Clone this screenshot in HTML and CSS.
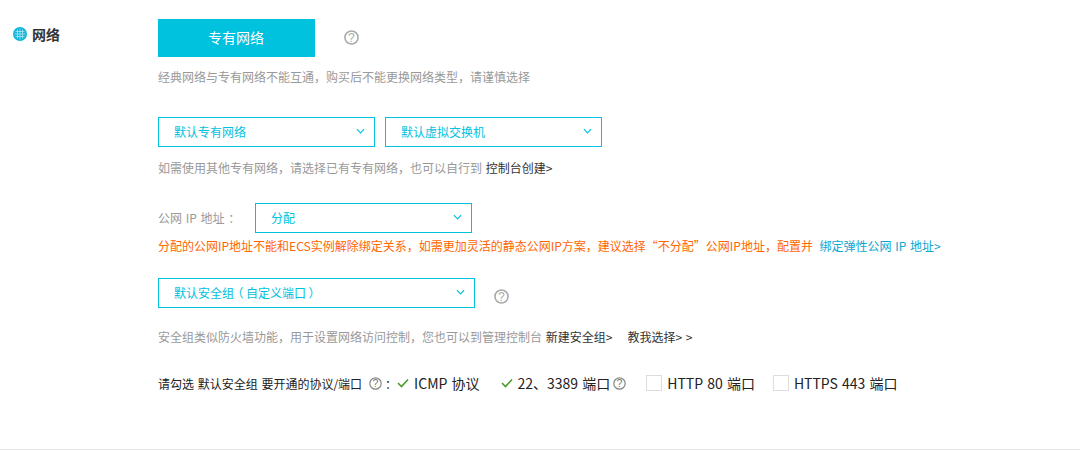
FILE: index.html
```html
<!DOCTYPE html>
<html lang="zh-CN">
<head>
<meta charset="utf-8">
<title>网络</title>
<link rel="stylesheet" href="styles.css">
</head>
<body>
<section class="section">
  <div class="label">
    <svg class="globe" viewBox="0 0 14 14" width="14" height="14">
      <circle cx="7" cy="7" r="7" fill="#12b5d8"/>
      <path d="M4.5 2.5v9M7 1.5v11M9.500 2.500v9M2.500 4.500h9M1.500 7h11M2.500 9.500h9" stroke="#a8e6f3" stroke-width=".8" fill="none"/>
    </svg>
    <span>网络</span>
  </div>
  <div class="content">
    <div class="row-network">
      <button class="primary">专有网络</button>
      <svg class="help help-lg" viewBox="0 0 16 16" width="15" height="15"><circle cx="8" cy="8" r="7" fill="none" stroke="#aaa" stroke-width="1.7"/><text x="8" y="12.7" text-anchor="middle" class="help-mark">?</text></svg>
    </div>
    <p class="hint hint-1">经典网络与专有网络不能互通，购买后不能更换网络类型，请谨慎选择</p>
    <div class="row-selects">
      <div class="select w217"><span>默认专有网络</span><svg class="chev" viewBox="0 0 10 6" width="9" height="6"><path d="M1 1l4 4 4-4" fill="none" stroke="#00c1de" stroke-width="1.3"/></svg></div>
      <div class="select w217"><span>默认虚拟交换机</span><svg class="chev" viewBox="0 0 10 6" width="9" height="6"><path d="M1 1l4 4 4-4" fill="none" stroke="#00c1de" stroke-width="1.3"/></svg></div>
    </div>
    <p class="hint hint-2">如需使用其他专有网络，请选择已有专有网络，也可以自行到 <a class="dark">控制台创建&gt;</a></p>
    <div class="row-ip">
      <span class="ip-label">公网 IP 地址 ：</span>
      <div class="select w217"><span>分配</span><svg class="chev" viewBox="0 0 10 6" width="9" height="6"><path d="M1 1l4 4 4-4" fill="none" stroke="#00c1de" stroke-width="1.3"/></svg></div>
    </div>
    <p class="warn">分配的公网IP地址不能和ECS实例解除绑定关系，如需更加灵活的静态公网IP方案，建议选择“不分配”公网IP地址，配置并 <a class="blue">绑定弹性公网 IP 地址&gt;</a></p>
    <div class="row-sg">
      <div class="select w317"><span>默认安全组<span class="paren">（</span>自定义端口<span class="paren">）</span></span><svg class="chev" viewBox="0 0 10 6" width="9" height="6"><path d="M1 1l4 4 4-4" fill="none" stroke="#00c1de" stroke-width="1.3"/></svg></div>
      <svg class="help help-sg" viewBox="0 0 16 16" width="15" height="15"><circle cx="8" cy="8" r="7" fill="none" stroke="#aaa" stroke-width="1.7"/><text x="8" y="12.7" text-anchor="middle" class="help-mark">?</text></svg>
    </div>
    <p class="hint hint-3">安全组类似防火墙功能，用于设置网络访问控制，您也可以到管理控制台 <a class="dark">新建安全组&gt;</a><a class="dark teach">教我选择&gt; &gt;</a></p>
    <div class="row-ports">
      <span class="ports-label">请勾选 默认安全组 要开通的协议/端口</span>
      <svg class="help help-sm" viewBox="0 0 16 16" width="13" height="13"><circle cx="8" cy="8" r="7" fill="none" stroke="#888" stroke-width="1.5"/><text x="8" y="12.7" text-anchor="middle" class="help-mark dark-mark">?</text></svg>
      <span class="colon">：</span>
      <span class="port port-icmp"><svg class="check" viewBox="0 0 12 10" width="12" height="10"><path d="M1 5l3.5 3.5L11 1.5" fill="none" stroke="#4a9a2e" stroke-width="1.6"/></svg>ICMP 协议</span>
      <span class="port port-rdp"><svg class="check" viewBox="0 0 12 10" width="12" height="10"><path d="M1 5l3.5 3.5L11 1.5" fill="none" stroke="#4a9a2e" stroke-width="1.6"/></svg>22、3389 端口</span>
      <svg class="help help-sm2" viewBox="0 0 16 16" width="13" height="13"><circle cx="8" cy="8" r="7" fill="none" stroke="#888" stroke-width="1.5"/><text x="8" y="12.7" text-anchor="middle" class="help-mark dark-mark">?</text></svg>
      <span class="port port-http"><i class="box"></i>HTTP 80 端口</span>
      <span class="port port-https"><i class="box"></i>HTTPS 443 端口</span>
    </div>
  </div>
</section>
</body>
</html>
```

FILE: styles.css
```css
* { box-sizing: border-box; }
html, body { margin: 0; padding: 0; background: #fff; }
body {
  font-family: "Noto Sans CJK SC", sans-serif;
  font-size: 12px;
  word-spacing: 1px;
  color: #333;
  height: 451px;
  overflow: hidden;
}
a { text-decoration: none; }
p { margin: 0; line-height: 18px; }
.section {
  display: flex;
  height: 450px;
  border-bottom: 1px solid #e8e8e8;
  padding: 19px 0 0 13px;
}
.label {
  width: 145px;
  flex: none;
  display: flex;
  align-items: center;
  gap: 5px;
  height: 30px;
  font-size: 14px;
  font-weight: 700;
  color: #333;
}
.content { flex: 1; min-width: 0; }
.row-network { display: flex; align-items: center; height: 38px; }
.primary {
  width: 157px;
  height: 38px;
  border: 0;
  background: #00c1de;
  color: #fff;
  font: inherit;
  font-size: 14px;
  padding: 0 1px 2px 0;
}
.help { flex: none; }
.help-lg { margin-left: 29px; margin-top: -1px; }
.help-mark { font-family: "Liberation Sans", sans-serif; font-size: 13px; fill: #aaa; }
.dark-mark { fill: #777; }
.hint { color: #999; }
.hint-1 { margin-top: 11px; }
.row-selects { display: flex; gap: 10px; margin-top: 31px; }
.select {
  height: 30px;
  border: 1px solid #00c1de;
  color: #00c1de;
  display: flex;
  align-items: center;
  justify-content: space-between;
  padding: 0 9px 2px 15px;
  background: #fff;
}
.paren {
  display: inline-block;
  width: 12px;
  text-align: center;
  font-feature-settings: "palt";
}
.w217 { width: 217px; }
.w317 { width: 317px; }
.hint-2 { margin-top: 12px; }
.dark { color: #333; }
.row-ip { display: flex; align-items: center; margin-top: 26px; }
.ip-label { width: 97px; color: #999; padding-bottom: 2px; }
.warn { color: #ff6600; margin-top: 4px; }
.blue { color: #0ea5d0; margin-left: 3px; }
.row-sg { display: flex; align-items: center; margin-top: 23px; }
.help-sg { margin-left: 19px; margin-top: 6px; }
.hint-3 { margin-top: 20px; }
.teach { margin-left: 15px; }
.row-ports { display: flex; align-items: center; margin-top: 26px; height: 22px; color: #222; }
.help-sm { margin-left: 7px; }
.colon { width: 15px; padding-left: 3px; }
.port { display: inline-flex; align-items: center; font-size: 14px; }
.check { margin-right: 5px; }
.port-rdp { margin-left: 21px; }
.help-sm2 { margin-left: 3px; }
.port-http { margin-left: 20px; }
.port-https { margin-left: 18px; }
.box { width: 16px; height: 16px; border: 1px solid #ddd; margin-right: 5px; }
```
